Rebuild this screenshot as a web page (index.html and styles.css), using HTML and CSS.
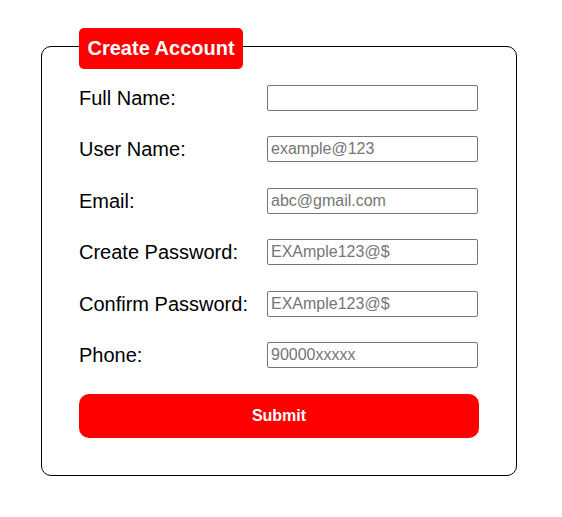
FILE: index.html
```html
<!DOCTYPE html>
<html>
<head>
<meta charset="utf-8">
<link rel="stylesheet" href="styles.css">
</head>
<body>
<form class="signup">
  <fieldset class="box">
    <legend class="title"><span class="title-pill">Create Account</span></legend>
    <div class="fields">
      <label class="lbl" for="fn">Full Name:</label>
      <input class="inp" id="fn" type="text">
      <label class="lbl" for="un">User Name:</label>
      <input class="inp" id="un" type="text" placeholder="example@123">
      <label class="lbl" for="em">Email:</label>
      <input class="inp" id="em" type="text" placeholder="abc@gmail.com">
      <label class="lbl" for="cp">Create Password:</label>
      <input class="inp" id="cp" type="text" placeholder="EXAmple123@$">
      <label class="lbl" for="cf">Confirm Password:</label>
      <input class="inp" id="cf" type="text" placeholder="EXAmple123@$">
      <label class="lbl" for="ph">Phone:</label>
      <input class="inp" id="ph" type="text" placeholder="90000xxxxx">
    </div>
    <button class="submit" type="button">Submit</button>
  </fieldset>
</form>
</body>
</html>
```
FILE: styles.css
```css
html, body {
  margin: 0;
  padding: 0;
  background: #ffffff;
}
body {
  font-family: "Liberation Sans", Arial, sans-serif;
  padding: 28px 0 0 41px;
}
.signup {
  margin: 0;
}
.box {
  box-sizing: border-box;
  width: 476px;
  margin: 0;
  border: 1px solid #000;
  border-radius: 10px;
  padding: 21px 37px 37px 37px;
}
.title {
  padding: 0;
  height: 36px;
  line-height: 0;
}
.title-pill {
  display: inline-block;
  box-sizing: border-box;
  height: 41px;
  background: #ff0000;
  color: #fff;
  font-weight: bold;
  font-size: 20px;
  line-height: 25px;
  padding: 8px 8.5px;
  border-radius: 5px;
  vertical-align: top;
}
.fields {
  display: grid;
  grid-template-columns: 188px 211px;
  row-gap: 25.4px;
  align-items: center;
}
.lbl {
  font-size: 20px;
  color: #000;
  line-height: 26px;
}
.inp {
  box-sizing: border-box;
  height: 26px;
  width: 211px;
  margin: 0;
  border: 1px solid #767676;
  border-radius: 2px;
  padding: 1px 3px;
  font-family: "Liberation Sans", Arial, sans-serif;
  font-size: 16px;
  color: #000;
}
.inp::placeholder {
  color: #757575;
}
.submit {
  display: block;
  box-sizing: border-box;
  width: 400px;
  height: 44px;
  margin: 26px 0 0 0;
  border: none;
  border-radius: 10px;
  background: #ff0000;
  color: #fff;
  font-family: "Liberation Sans", Arial, sans-serif;
  font-weight: bold;
  font-size: 16px;
}
```
